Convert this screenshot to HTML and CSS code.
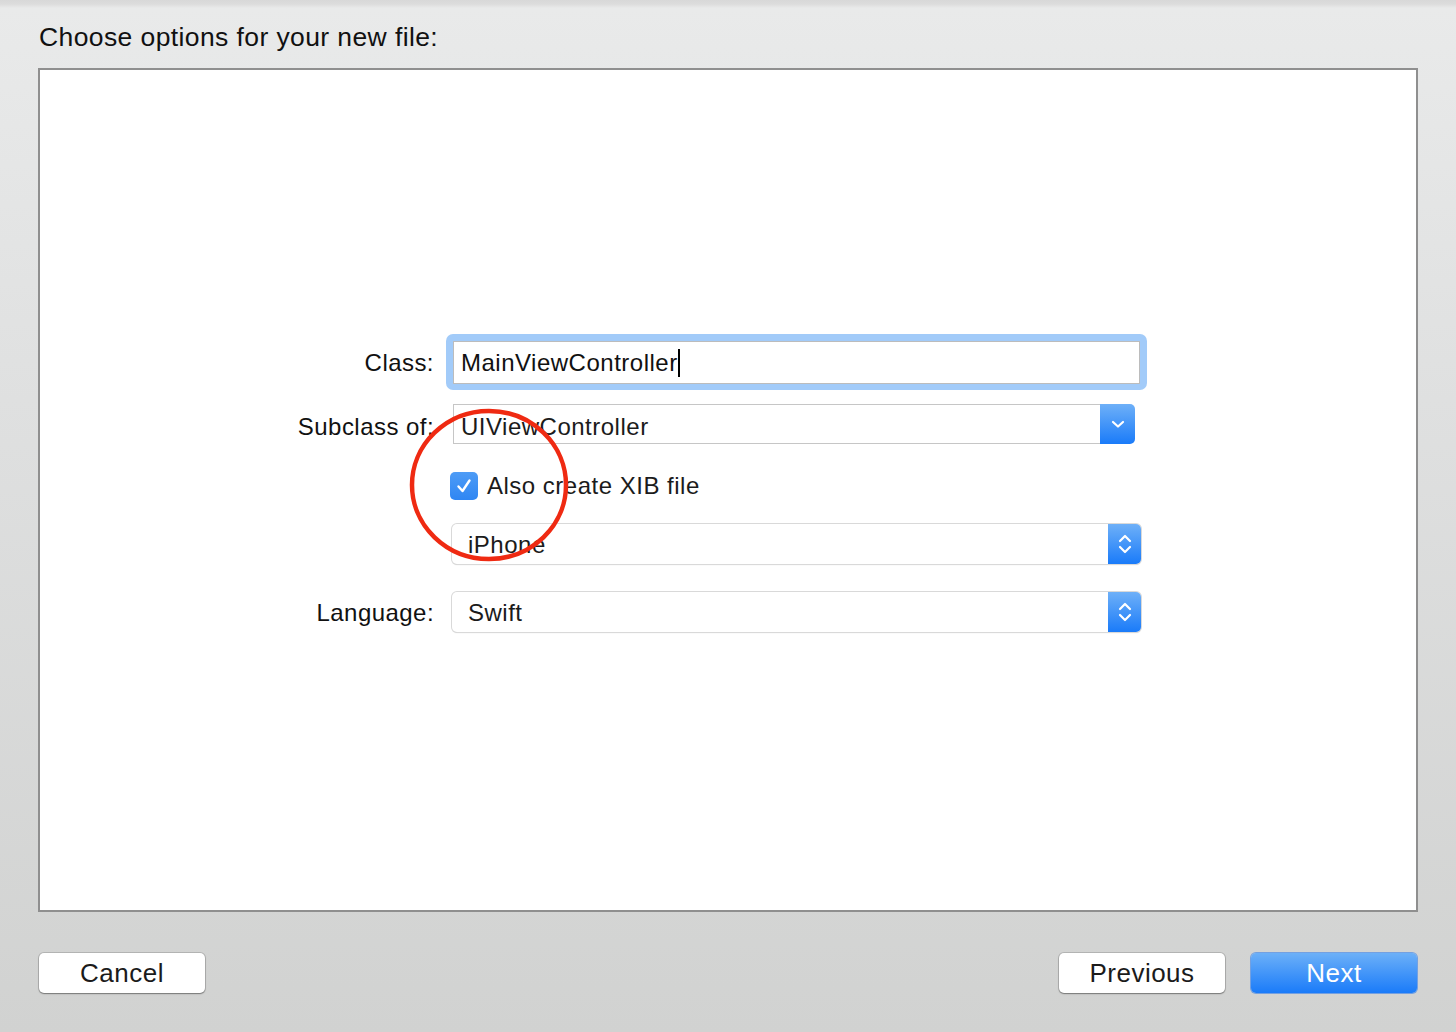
FILE: index.html
```html
<!DOCTYPE html>
<html>
<head>
<meta charset="utf-8">
<link rel="stylesheet" href="styles.css">
</head>
<body>
<div class="sheet">
  <h1 class="title">Choose options for your new file:</h1>
  <div class="panel">
    <div class="form">
      <div class="row row-class">
        <label class="label">Class:</label>
        <div class="focus-ring">
          <div class="textfield"><span class="value">MainViewController</span><span class="caret"></span></div>
        </div>
      </div>
      <div class="row row-subclass">
        <label class="label label-sub">Subclass of:</label>
        <div class="combo">
          <div class="combo-field">UIViewController</div>
          <div class="combo-btn">
            <svg width="14" height="10" viewBox="0 0 14 10"><path d="M2 3 L7 7.5 L12 3" fill="none" stroke="#fff" stroke-width="2.2" stroke-linecap="round" stroke-linejoin="round"/></svg>
          </div>
        </div>
      </div>
      <div class="row row-check">
        <div class="label"></div>
        <div class="checkbox">
          <svg width="20" height="20" viewBox="0 0 20 20"><path d="M4.5 10.5 L8.5 15 L15.5 4.5" fill="none" stroke="#fff" stroke-width="2.4" stroke-linecap="round" stroke-linejoin="round"/></svg>
        </div>
        <span class="check-label">Also create XIB file</span>
      </div>
      <div class="row row-popup">
        <div class="label"></div>
        <div class="popup">
          <div class="popup-value">iPhone</div>
          <div class="popup-btn">
            <svg width="16" height="26" viewBox="0 0 16 26"><path d="M3 10 L8 5 L13 10 M3 16 L8 21 L13 16" fill="none" stroke="#fff" stroke-width="2.2" stroke-linecap="round" stroke-linejoin="round"/></svg>
          </div>
        </div>
      </div>
      <div class="row row-lang">
        <label class="label">Language:</label>
        <div class="popup">
          <div class="popup-value">Swift</div>
          <div class="popup-btn">
            <svg width="16" height="26" viewBox="0 0 16 26"><path d="M3 10 L8 5 L13 10 M3 16 L8 21 L13 16" fill="none" stroke="#fff" stroke-width="2.2" stroke-linecap="round" stroke-linejoin="round"/></svg>
          </div>
        </div>
      </div>
    </div>
  </div>
  <div class="footer">
    <button class="btn">Cancel</button>
    <div class="spacer"></div>
    <button class="btn">Previous</button>
    <button class="btn btn-primary">Next</button>
  </div>
  <svg class="annotation" width="170" height="162" viewBox="0 0 170 162"><ellipse cx="80" cy="77" rx="77" ry="74" fill="none" stroke="#ef2a12" stroke-width="4.5"/></svg>
</div>
</body>
</html>
```

FILE: styles.css
```css
* { box-sizing: border-box; }
html, body {
  margin: 0;
  padding: 0;
}
body {
  width: 1456px;
  height: 1032px;
  overflow: hidden;
  font-family: "Liberation Sans", Arial, sans-serif;
  color: #1b1b1b;
  background: linear-gradient(to bottom, #d8d8d8 0px, #dcdcdc 4px, #e9eaea 8px, #dfe0e0 400px, #d1d2d1 1032px);
}
.sheet {
  position: relative;
  height: 1032px;
  display: flex;
  flex-direction: column;
}
.title {
  margin: 0;
  padding: 22px 0 0 39px;
  height: 68px;
  font-size: 26.5px;
  line-height: 30px;
  letter-spacing: 0.4px;
  font-weight: normal;
  color: #111;
}
.panel {
  margin-left: 38px;
  width: 1380px;
  height: 844px;
  border: 2px solid #8f8f8f;
  background: #fff;
  padding-top: 264px;
}
.form {
  display: flex;
  flex-direction: column;
}
.row {
  display: flex;
  align-items: center;
}
.label {
  width: 394px;
  flex: none;
  text-align: right;
  font-size: 24px;
  letter-spacing: 0.45px;
  color: #111;
  padding-top: 2px;
}
.label-sub { padding-top: 6px; }
.row-class { height: 56px; }
.row-subclass { height: 40px; margin-top: 14px; }
.row-check { height: 28px; margin-top: 28px; }
.row-popup { height: 40px; margin-top: 24px; }
.row-lang { height: 40px; margin-top: 28px; }

.focus-ring {
  margin-left: 12px;
  width: 701px;
  height: 56px;
  padding: 7px 7px 6px 7px;
  border-radius: 7px;
  background: #a2cbf9;
}
.textfield {
  height: 43px;
  background: #fff;
  border: 1px solid #bcbcbc;
  display: flex;
  align-items: center;
  padding-left: 7px;
  padding-top: 1px;
  font-size: 24px;
  letter-spacing: 0.5px;
  color: #111;
}
.caret {
  display: inline-block;
  width: 2px;
  height: 28px;
  background: #000;
  margin-left: 0px;
}
.combo {
  margin-left: 19px;
  width: 682px;
  height: 40px;
  display: flex;
}
.combo-field {
  flex: 1;
  border: 1px solid #c6c6c6;
  border-right: none;
  background: #fff;
  font-size: 24px;
  letter-spacing: 0.5px;
  line-height: 44px;
  padding-left: 7px;
  color: #1b1b1b;
}
.combo-btn {
  width: 35px;
  border-radius: 0 5px 5px 0;
  background: linear-gradient(to bottom, #6eb0f8, #1a7bf9);
  display: flex;
  align-items: center;
  justify-content: center;
}
.checkbox {
  margin-left: 16px;
  width: 28px;
  height: 28px;
  border-radius: 5px;
  background: linear-gradient(to bottom, #4e9cf6, #2f86f3);
  display: flex;
  align-items: center;
  justify-content: center;
}
.check-label {
  margin-left: 9px;
  font-size: 24px;
  letter-spacing: 0.5px;
  color: #1b1b1b;
}
.popup {
  margin-left: 18px;
  width: 689px;
  height: 40px;
  display: flex;
  border-radius: 5px;
  background: #fff;
  box-shadow: 0 0 0 1px #d9d9d9, 0 1px 1px 0 rgba(0,0,0,0.2);
}
.popup-value {
  flex: 1;
  font-size: 24px;
  letter-spacing: 0.5px;
  line-height: 42px;
  padding-left: 16px;
  color: #1b1b1b;
}
.popup-btn {
  width: 33px;
  border-radius: 0 5px 5px 0;
  background: linear-gradient(to bottom, #6eb0f8, #1a7bf9);
  display: flex;
  align-items: center;
  justify-content: center;
}
.footer {
  display: flex;
  padding: 41px 39px 0 39px;
}
.spacer { flex: 1; }
.btn {
  width: 166px;
  height: 40px;
  border-radius: 5px;
  border: none;
  background: #fff;
  box-shadow: 0 0 0 1px rgba(0,0,0,0.14), 0 1px 1.5px 0 rgba(0,0,0,0.35);
  font-family: "Liberation Sans", Arial, sans-serif;
  font-size: 26px;
  letter-spacing: 0.5px;
  color: #1b1b1b;
  padding: 0;
  line-height: 40px;
}
.btn + .btn { margin-left: 26px; }
.btn-primary {
  color: #fff;
  background: linear-gradient(to bottom, #6cb0f8, #1a7bf9);
  box-shadow: 0 0 0 1px rgba(20,110,240,0.5);
}
.annotation {
  position: absolute;
  left: 409px;
  top: 408px;
}
```
